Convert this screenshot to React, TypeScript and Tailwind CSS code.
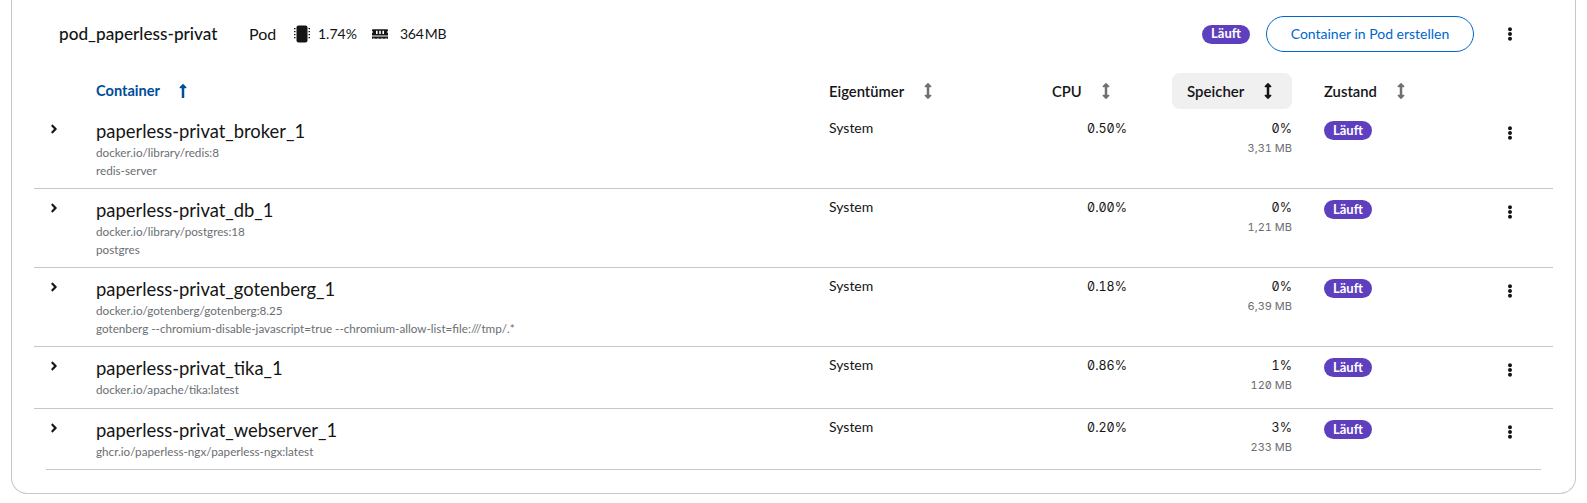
import React from 'react';
import { FaAngleRight, FaArrowsAltV, FaEllipsisV, FaLongArrowAltUp, FaMemory } from 'react-icons/fa';

const rows = [
  { name: 'paperless-privat_broker_1', image: 'docker.io/library/redis:8', command: 'redis-server', cpu: '0.50%', mem: '0%', used: '3,31 MB' },
  { name: 'paperless-privat_db_1', image: 'docker.io/library/postgres:18', command: 'postgres', cpu: '0.00%', mem: '0%', used: '1,21 MB' },
  { name: 'paperless-privat_gotenberg_1', image: 'docker.io/gotenberg/gotenberg:8.25', command: 'gotenberg --chromium-disable-javascript=true --chromium-allow-list=file:///tmp/.*', cpu: '0.18%', mem: '0%', used: '6,39 MB' },
  { name: 'paperless-privat_tika_1', image: 'docker.io/apache/tika:latest', cpu: '0.86%', mem: '1%', used: '120 MB' },
  { name: 'paperless-privat_webserver_1', image: 'ghcr.io/paperless-ngx/paperless-ngx:latest', cpu: '0.20%', mem: '3%', used: '233 MB' },
];

const cols = 'grid grid-cols-[62px_733px_207px_107px_165px_1fr_60px]';
const nums = "font-['Inter',sans-serif] tabular-nums slashed-zero";

function Badge() {
  return (
    <span className="inline-flex h-[19px] items-center rounded-full bg-[#5e40be] px-[9px] text-[13px] font-bold text-white">
      Läuft
    </span>
  );
}

function Kebab() {
  return <FaEllipsisV className="h-[14px] w-4 text-[#151515]" />;
}

function ChipIcon() {
  return (
    <svg viewBox="0 0 16 18" className="h-[18px] w-4 text-[#151515]" fill="currentColor">
      <rect x="2.5" y="0.5" width="11" height="17" rx="2" />
      <path d="M0 3h1.5v1.2H0zM0 6h1.5v1.2H0zM0 9h1.5v1.2H0zM0 12h1.5v1.2H0zM14.5 3H16v1.2h-1.5zM14.5 6H16v1.2h-1.5zM14.5 9H16v1.2h-1.5zM14.5 12H16v1.2h-1.5z" />
    </svg>
  );
}

function SortHead({ label, active }: { label: string; active?: boolean }) {
  return (
    <div className={`flex items-center gap-4 text-[14.8px] font-semibold text-[#151515] ${active ? 'h-9 rounded-lg bg-[#f0f0f0] pl-[15px] text-[15px]' : ''}`}>
      <span>{label}</span>
      <FaArrowsAltV className={`h-4 w-4 ${active ? 'text-[#151515]' : 'text-[#707070]'}`} />
    </div>
  );
}

export default function App() {
  return (
    <div className="min-h-[503px] bg-white font-['Lato',sans-serif] text-[#151515]">
      <div className="ml-[11px] mr-[11px] rounded-b-2xl border-x border-b border-[#c7c7c7] pb-[23px]">
        <div className="flex items-center pb-[21px] pl-[47px] pr-[57px] pt-4">
          <span className="w-[190px] text-[17.2px] font-medium">pod_paperless-privat</span>
          <span className="w-[45px] text-base">Pod</span>
          <ChipIcon />
          <span className="ml-2 w-[54px] text-sm">1.74%</span>
          <FaMemory className="h-4 w-4" />
          <span className="ml-3 text-sm tracking-[-0.3px] [word-spacing:-2px]">364 MB</span>
          <div className="ml-auto flex items-center gap-4">
            <Badge />
            <button className="h-9 w-[208px] rounded-full border border-[#0066cc] text-sm text-[#0066cc]">
              Container in Pod erstellen
            </button>
            <div className="ml-3"><Kebab /></div>
          </div>
        </div>

        <div className="ml-[22px] mr-[22px]">
          <div className={`${cols} mb-px h-9 items-center`}>
            <div />
            <div className="flex items-center gap-[15px] text-[14.6px] font-bold text-[#004d99]">
              Container
              <FaLongArrowAltUp className="h-4 w-4" />
            </div>
            <SortHead label="Eigentümer" />
            <div className="pl-4"><SortHead label="CPU" /></div>
            <div className="pl-[29px] pr-4"><SortHead label="Speicher" active /></div>
            <div className="pl-4"><SortHead label="Zustand" /></div>
            <div />
          </div>

          {rows.map((row, i) => (
            <div
              key={row.name}
              className={`${cols} pt-[7px] ${row.command ? 'pb-[9px]' : 'pb-[9.5px]'} ${i < rows.length - 1 ? 'border-b border-[#c7c7c7]' : ''}`}
            >
              <div className="pl-[13px] pt-[5px]"><FaAngleRight className="h-[14px] w-[14px]" /></div>
              <div className="pt-[3px]">
                <div className="text-[18.4px] leading-[23px]">{row.name}</div>
                <div className="text-[11.7px] leading-[18px] text-[#6a6e73]">{row.image}</div>
                {row.command && <div className="text-[11.7px] leading-[18px] text-[#6a6e73]">{row.command}</div>}
              </div>
              <div className="text-sm leading-[21px]">System</div>
              <div className={`${nums} pr-4 pt-px text-right text-[12.5px] leading-[21px]`}>{row.cpu}</div>
              <div className="pr-4 pt-px text-right">
                <div className={`${nums} text-[12.5px] leading-[21px]`}>{row.mem}</div>
                <div className={`${nums} text-[11px] leading-[18px] text-[#6a6e73]`}>{row.used}</div>
              </div>
              <div className="pl-4"><Badge /></div>
              <div className="pl-[9px] pt-[9px]"><Kebab /></div>
            </div>
          ))}
          <div className="mx-3 border-t border-[#c7c7c7]" />
        </div>
      </div>
    </div>
  );
}
